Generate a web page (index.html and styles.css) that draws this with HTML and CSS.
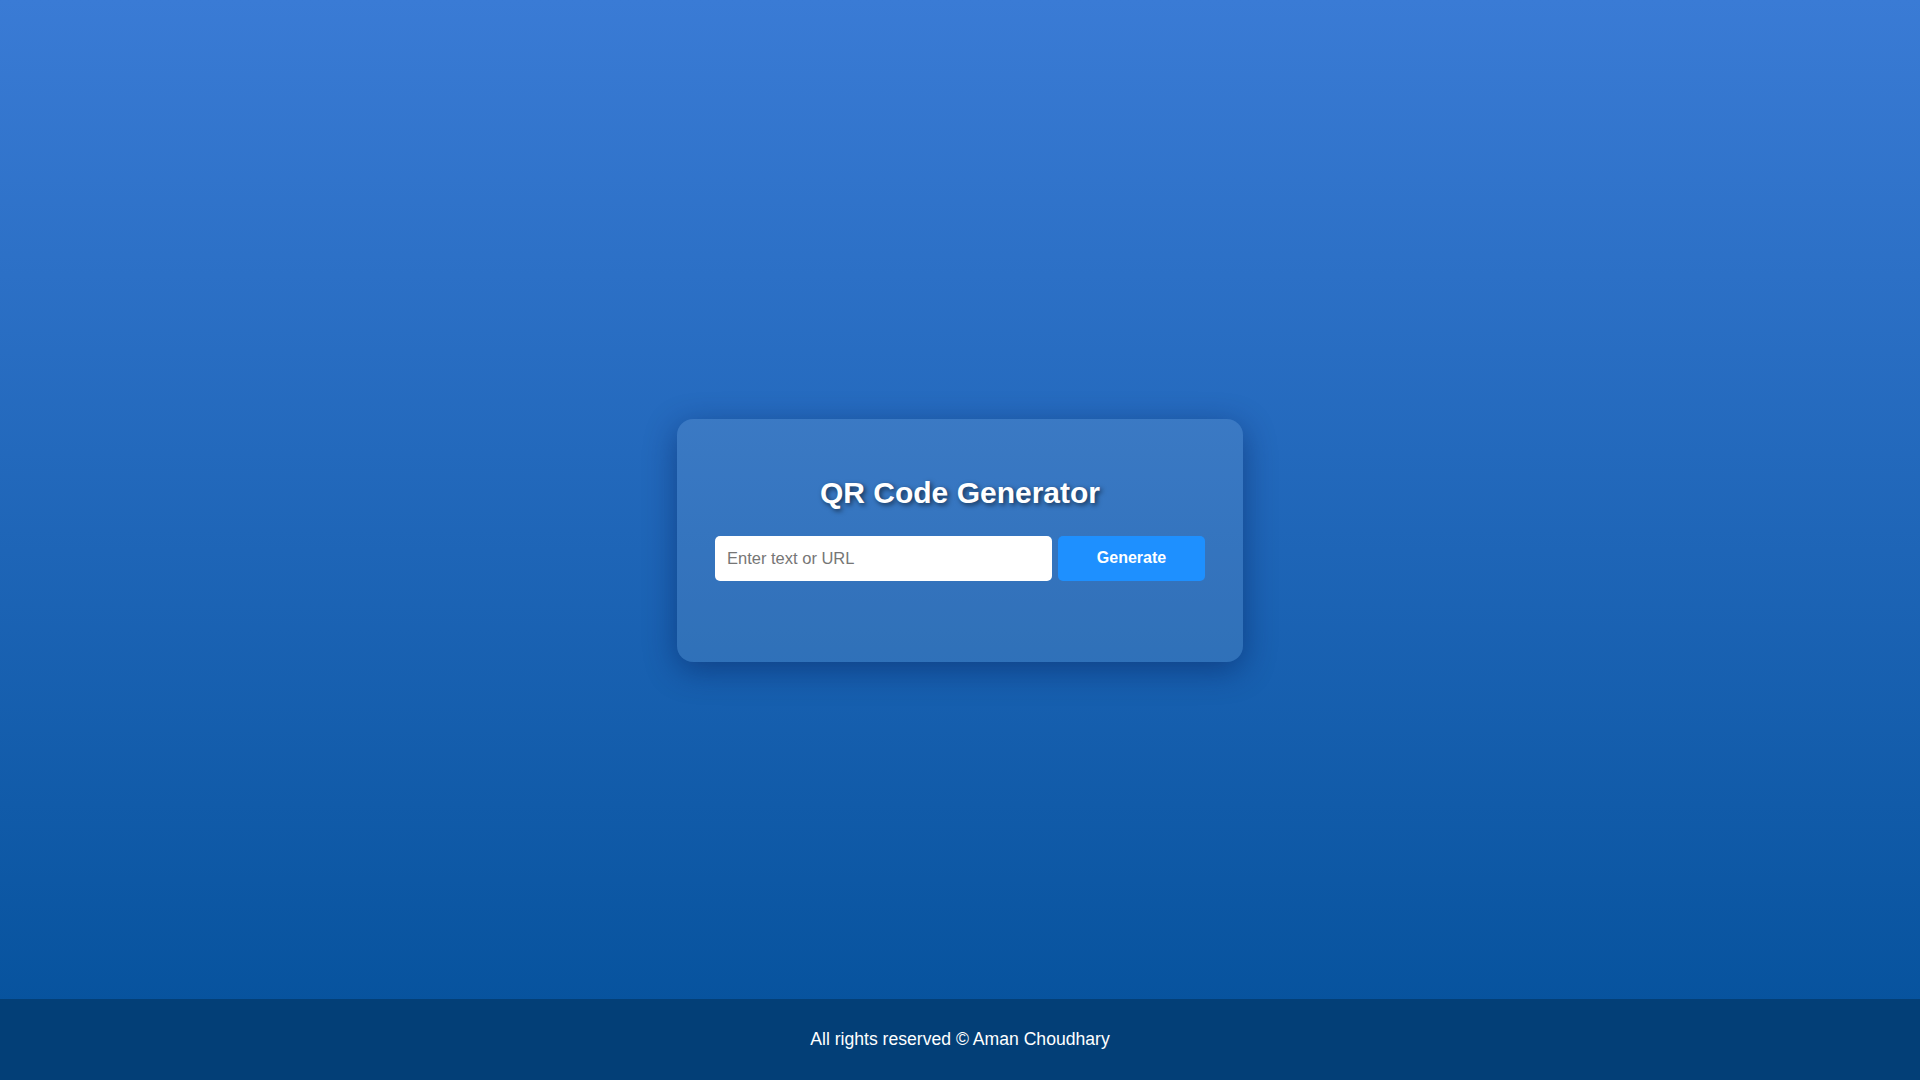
FILE: index.html
```html
<!DOCTYPE html>
<html lang="en">
<head>
<meta charset="UTF-8">
<title>QR Code Generator</title>
<link rel="stylesheet" href="styles.css">
</head>
<body>
  <main class="page">
    <section class="card">
      <h1 class="title">QR Code Generator</h1>
      <div class="form-row">
        <input class="text-input" type="text" placeholder="Enter text or URL">
        <button class="generate-btn" type="button">Generate</button>
      </div>
      <div class="qr-output"></div>
    </section>
  </main>
  <footer class="footer">All rights reserved © Aman Choudhary</footer>
</body>
</html>
```

FILE: styles.css
```css
* {
  box-sizing: border-box;
}

html, body {
  margin: 0;
  padding: 0;
  height: 100%;
}

body {
  font-family: "Liberation Sans", Arial, sans-serif;
  background: linear-gradient(to bottom, #3a7bd5 0%, #03509a 100%);
  color: #fff;
  overflow: hidden;
}

.page {
  height: 100vh;
  display: flex;
  align-items: center;
  justify-content: center;
}

.card {
  width: 566px;
  padding: 38px 38px 38px;
  border-radius: 16px;
  background: rgba(255, 255, 255, 0.1);
  box-shadow: 0 8px 32px rgba(5, 25, 80, 0.45);
  text-align: center;
}

.title {
  margin: 19px 0 26px;
  font-size: 30px;
  line-height: 34px;
  font-weight: bold;
  color: #fff;
  text-shadow: 2px 2px 5px rgba(0, 0, 0, 0.6);
}

.form-row {
  display: flex;
  gap: 6px;
  height: 45px;
}

.text-input {
  flex: 1;
  min-width: 0;
  height: 45px;
  border: none;
  border-radius: 5px;
  padding: 0 12px;
  font-family: "Liberation Sans", Arial, sans-serif;
  font-size: 16.5px;
  color: #333;
  background: #fff;
  outline: none;
}

.text-input::placeholder {
  color: #767676;
}

.generate-btn {
  width: 147px;
  height: 45px;
  border: none;
  border-radius: 5px;
  background: #1e90ff;
  color: #fff;
  font-family: "Liberation Sans", Arial, sans-serif;
  font-size: 16px;
  font-weight: bold;
  cursor: pointer;
}

.qr-output {
  height: 43px;
}

.footer {
  position: fixed;
  left: 0;
  right: 0;
  bottom: 0;
  height: 81px;
  padding: 30px 0;
  line-height: 21px;
  background: #033f77;
  color: #ffffff;
  font-size: 17.6px;
  text-align: center;
}
```
